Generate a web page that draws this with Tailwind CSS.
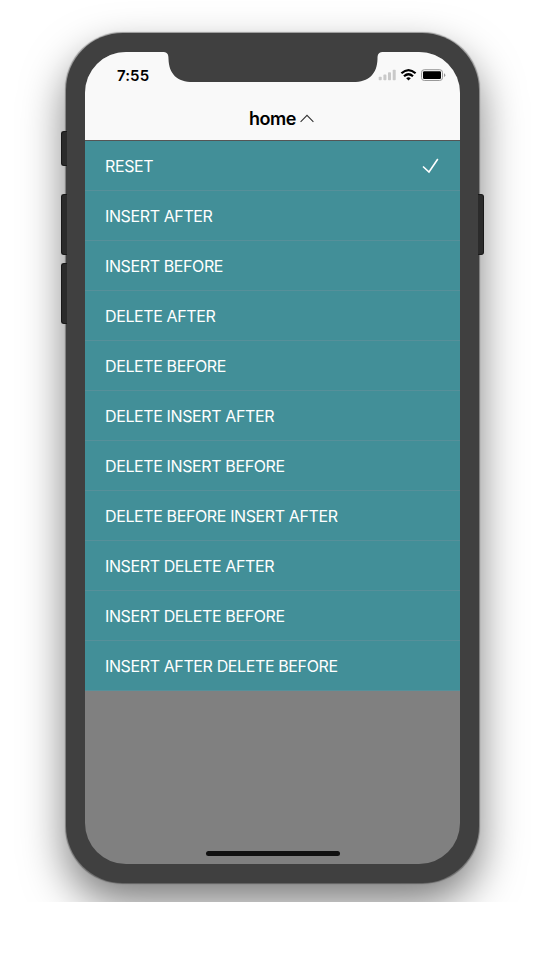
<!DOCTYPE html>
<html lang="en">
<head>
<meta charset="utf-8">
<title>home</title>
<script src="https://cdn.jsdelivr.net/npm/@tailwindcss/browser@4"></script>
</head>
<body class="bg-white font-['Inter','Liberation_Sans',sans-serif]">
<div class="h-[902px] w-[545px] overflow-hidden pt-[33px] pl-[66px]">
  <div class="relative h-[850px] w-[413px] rounded-[57px] bg-[#404040] px-[19px] pt-[19px] shadow-[0_0_1px_0.5px_rgba(0,0,0,0.35),0_20px_44px_rgba(0,0,0,0.52)]">
    <!-- side buttons -->
    <div class="absolute top-[98px] -left-[5px] h-[35px] w-[6px] rounded-l-[3px] border border-r-0 border-[#191919] bg-[#2b2b2b]"></div>
    <div class="absolute top-[161px] -left-[5px] h-[61px] w-[6px] rounded-l-[3px] border border-r-0 border-[#191919] bg-[#2b2b2b]"></div>
    <div class="absolute top-[230px] -left-[5px] h-[61px] w-[6px] rounded-l-[3px] border border-r-0 border-[#191919] bg-[#2b2b2b]"></div>
    <div class="absolute top-[161px] -right-[5px] h-[61px] w-[6px] rounded-r-[3px] border border-l-0 border-[#191919] bg-[#2b2b2b]"></div>
    <div class="relative flex h-[812px] w-[375px] flex-col overflow-hidden rounded-[41px] bg-[#808080]">
      <svg class="absolute top-0 left-[77px] z-10" width="222" height="30" viewBox="0 0 222 30"><path d="M0 0C5 0 6.500 1.500 6.500 7C7 22 15 30 31 30H191C207 30 215 22 215.500 7C215.500 1.500 217 0 222 0Z" fill="#404040"/></svg>
      <header class="flex h-[89px] flex-col border-b border-[#555] bg-[#f9f9f9]">
        <div class="flex h-11 items-center justify-between pr-[14px] pl-[32px]">
          <span class="pt-[4px] text-[15px] font-semibold tracking-[0.1px] text-black">7:55</span>
          <svg class="mt-[2px]" width="68" height="14" viewBox="0 0 68 14">
            <g fill="#c9c9c9"><rect x="0.700" y="8.700" width="3" height="3.600" rx="0.800"/><rect x="5.400" y="6.600" width="3" height="5.700" rx="0.800"/><rect x="10" y="4.200" width="3" height="8.100" rx="0.800"/><rect x="14.700" y="1.700" width="3" height="10.600" rx="0.800"/></g>
            <g fill="none" stroke="#000" stroke-width="2.200"><path d="M23.400 5.300Q30.500 -1.200 37.600 5.300"/><path d="M26 8.300Q30.500 4.200 35 8.300"/></g>
            <path d="M28.200 10.300Q30.500 8.300 32.800 10.300L30.500 12.600Z"/>
            <rect x="43.500" y="1.700" width="21" height="10.800" rx="2.800" fill="none" stroke="#999"/>
            <rect x="45" y="3.200" width="18" height="7.800" rx="1.200"/>
            <path d="M66 5.300Q67.300 6 67.300 7.200T66 9Z" fill="#999"/>
          </svg>
        </div>
        <div class="flex h-11 items-center justify-center gap-1 pt-px pl-[18px]">
          <h1 class="text-[18px] leading-none font-semibold tracking-[-0.4px] text-black">home</h1>
          <svg class="-mt-px" width="14" height="9" viewBox="0 0 14 9" fill="none" stroke="#333" stroke-width="1.100"><path d="M0.600 7.800L7 1.300L13.400 7.800"/></svg>
        </div>
      </header>
      <ul class="text-[16px] tracking-[-0.38px] text-white">
        <li class="flex h-[50px] items-center justify-between border-b border-[#56909a] bg-[#428f98] pr-[21px] pl-5"><span>RESET</span><svg class="mt-px" width="17" height="16" viewBox="0 0 17 16" fill="none" stroke="#fff" stroke-width="1.600"><path d="M1 8.500L7 14L15.800 1"/></svg></li>
        <li class="flex h-[50px] items-center border-b border-[#56909a] bg-[#428f98] pl-5">INSERT AFTER</li>
        <li class="flex h-[50px] items-center border-b border-[#56909a] bg-[#428f98] pl-5">INSERT BEFORE</li>
        <li class="flex h-[50px] items-center border-b border-[#56909a] bg-[#428f98] pl-5">DELETE AFTER</li>
        <li class="flex h-[50px] items-center border-b border-[#56909a] bg-[#428f98] pl-5">DELETE BEFORE</li>
        <li class="flex h-[50px] items-center border-b border-[#56909a] bg-[#428f98] pl-5">DELETE INSERT AFTER</li>
        <li class="flex h-[50px] items-center border-b border-[#56909a] bg-[#428f98] pl-5">DELETE INSERT BEFORE</li>
        <li class="flex h-[50px] items-center border-b border-[#56909a] bg-[#428f98] pl-5">DELETE BEFORE INSERT AFTER</li>
        <li class="flex h-[50px] items-center border-b border-[#56909a] bg-[#428f98] pl-5">INSERT DELETE AFTER</li>
        <li class="flex h-[50px] items-center border-b border-[#56909a] bg-[#428f98] pl-5">INSERT DELETE BEFORE</li>
        <li class="flex h-[50px] items-center border-b border-[#56909a] bg-[#428f98] pl-5">INSERT AFTER DELETE BEFORE</li>
      </ul>
      <div class="mx-auto mt-auto mb-2 h-[5px] w-[134px] rounded-full bg-[#111]"></div>
    </div>
  </div>
</div>
</body>
</html>
